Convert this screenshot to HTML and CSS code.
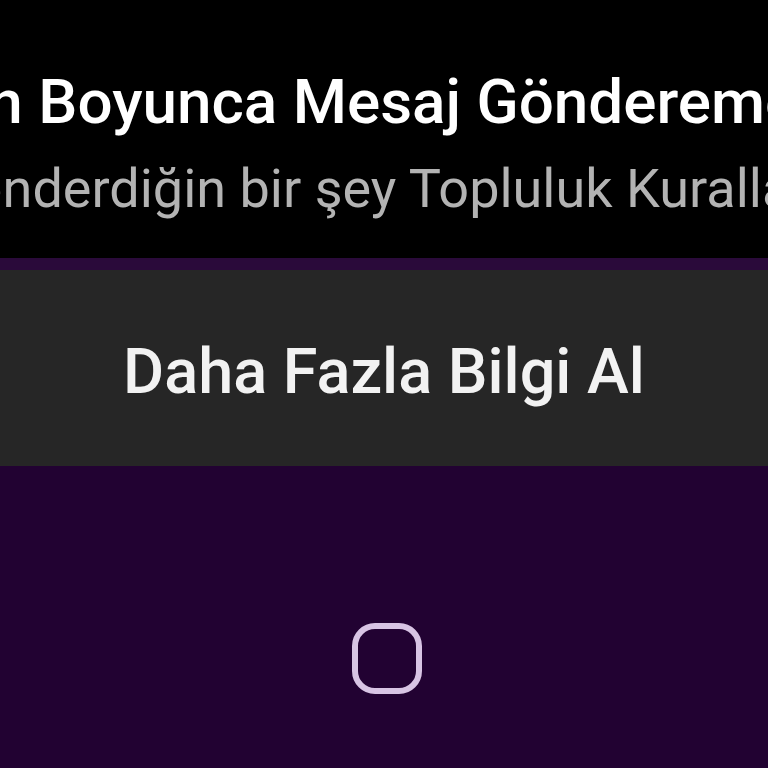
FILE: index.html
```html
<!DOCTYPE html>
<html lang="tr">
<head>
<meta charset="UTF-8">
<meta name="viewport" content="width=device-width, initial-scale=1.0">
<title>Mesaj Gönderemezsin</title>
<link rel="stylesheet" href="styles.css">
</head>
<body>
<div class="notice">
    <h1 class="title">1 Gün Boyunca Mesaj Gönderemezsin</h1>
    <p class="subtitle">Gönderdiğin bir şey Topluluk Kurallarımızı ihlal ediyor</p>
</div>
<div class="divider"></div>
<div class="more">Daha Fazla Bilgi Al</div>
<div class="navbar">
    <svg class="home" width="76" height="76" viewBox="0 0 76 76">
        <rect x="3" y="3" width="64" height="65" rx="20" fill="none" stroke="#d8c4e4" stroke-width="6"/>
    </svg>
</div>
</body>
</html>
```

FILE: styles.css
```css
body {
    margin: 0;
    background: #000;
    font-family: 'Roboto', 'Liberation Sans', sans-serif;
    overflow: hidden;
    height: 768px;
    display: flex;
    flex-direction: column;
}

.notice {
    height: 258px;
    padding-top: 67px;
    box-sizing: border-box;
    display: flex;
    flex-direction: column;
    overflow: hidden;
}

.title {
    margin: 0 0 0 -139px;
    font-size: 62px;
    line-height: 70px;
    font-weight: 500;
    color: #fff;
    white-space: nowrap;
}

.subtitle {
    margin: 20px 0 0 -65px;
    font-size: 54px;
    line-height: 64px;
    color: #b3b3b3;
    white-space: nowrap;
}

.divider {
    height: 12px;
    background: #2a0a3a;
}

.more {
    height: 196px;
    box-sizing: border-box;
    padding-top: 6px;
    background: #262626;
    color: #f2f2f2;
    font-size: 63px;
    font-weight: 500;
    display: flex;
    align-items: center;
    justify-content: center;
}

.navbar {
    flex: 1;
    background: #220232;
    display: flex;
    justify-content: center;
    padding-top: 157px;
}

.home {
    margin-left: 12px;
}
```
